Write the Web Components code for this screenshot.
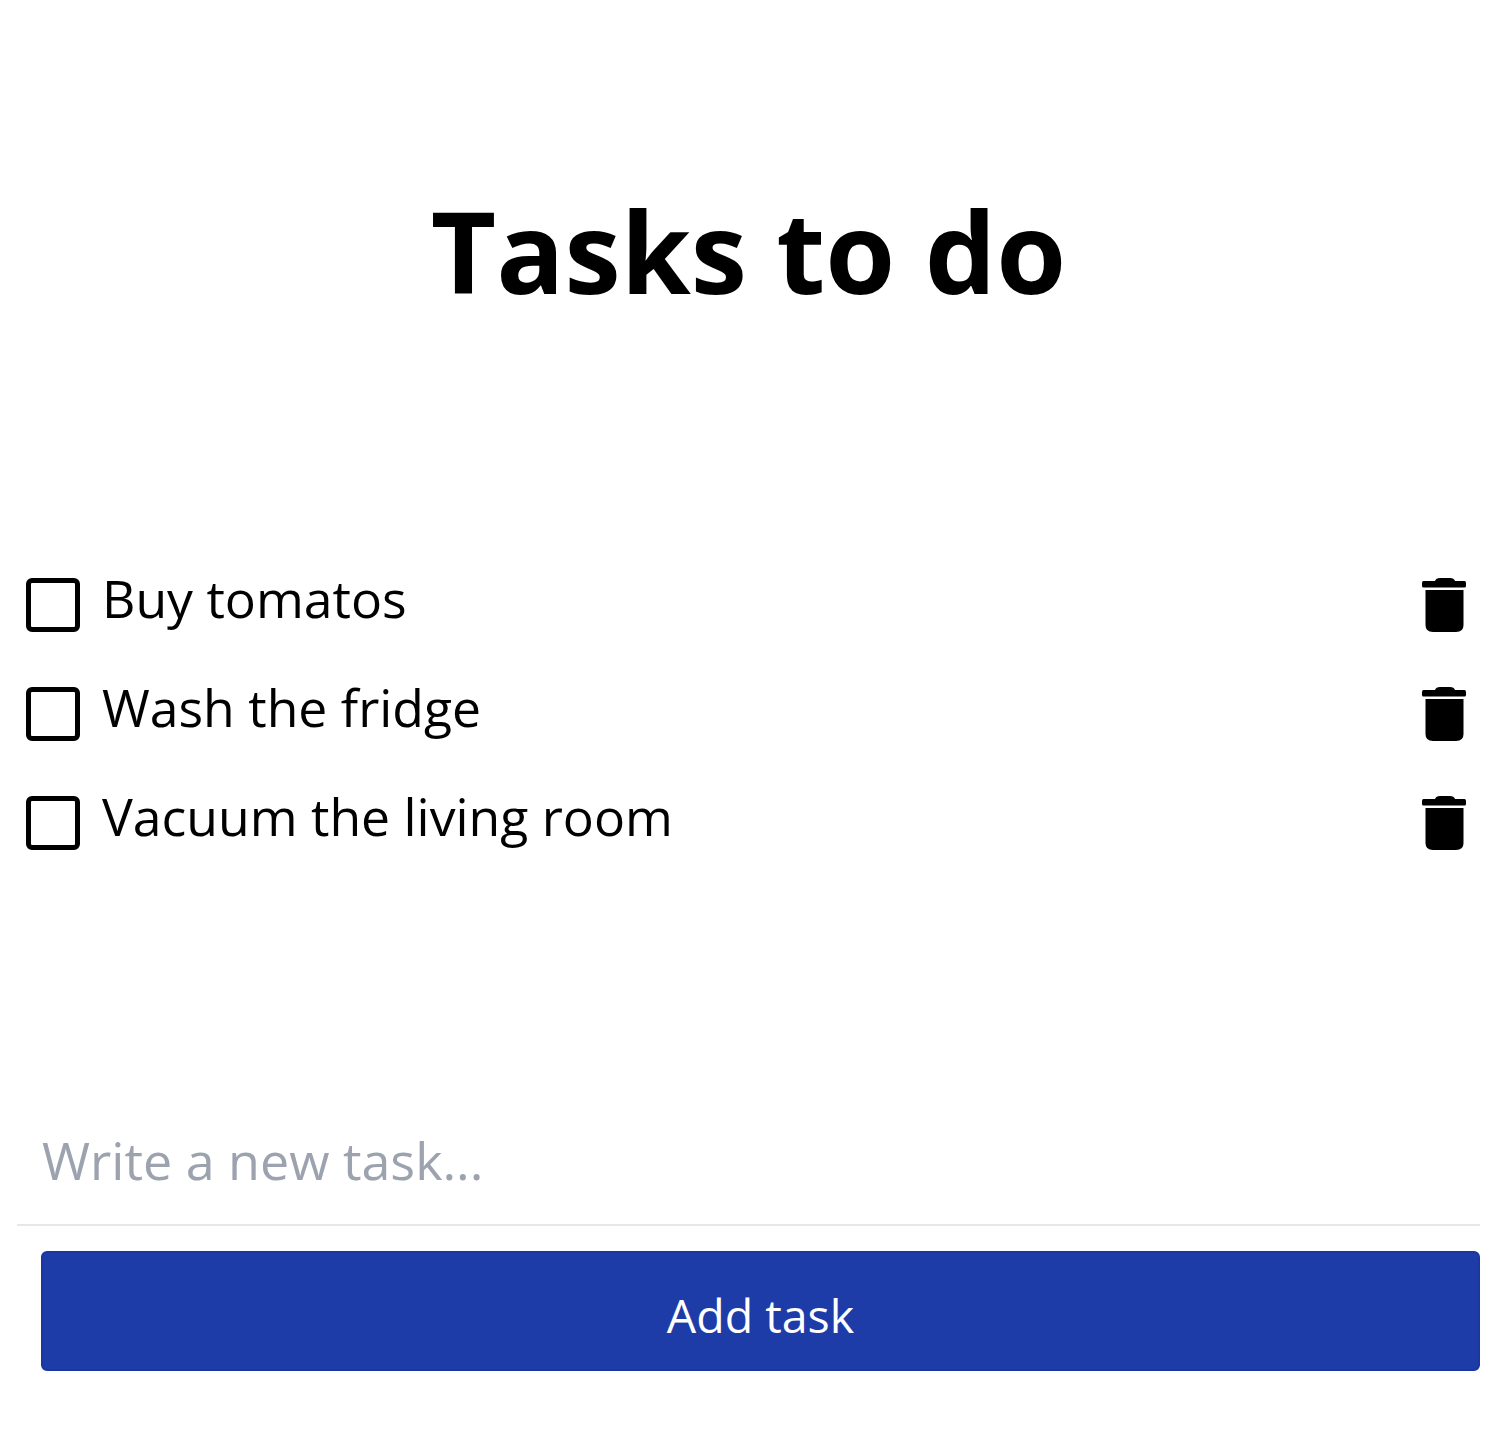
<!DOCTYPE html>
<html lang="en">
<head>
<meta charset="utf-8">
<title>Tasks to do</title>
<style>
  html, body { margin: 0; background: #fff; }
  body { font-family: "Open Sans", "Noto Sans", "Liberation Sans", sans-serif; color: #000; }
</style>
</head>
<body>
<todo-app>
  <task-item>Buy tomatos</task-item>
  <task-item>Wash the fridge</task-item>
  <task-item>Vacuum the living room</task-item>
</todo-app>
<script>
const itemTemplate = document.createElement('template')
itemTemplate.innerHTML = `
<style>
  :host { display: flex; align-items: flex-start; height: 54px; }
  #check {
    box-sizing: border-box;
    flex: none;
    width: 54px;
    height: 54px;
    border: 5px solid #000;
    border-radius: 6px;
    background: #fff;
    margin: 0;
    padding: 0;
    cursor: pointer;
  }
  #label {
    flex: 1;
    margin-left: 22px;
    font-size: 51.700px;
    line-height: 41px;
    white-space: nowrap;
  }
  button {
    flex: none;
    width: 44px;
    height: 54px;
    padding: 0;
    border: none;
    background: none;
    cursor: pointer;
  }
  svg { display: block; width: 44px; height: 54px; overflow: visible; }
</style>
<div id="check" role="checkbox"></div>
<div id="label"><slot></slot></div>
<button aria-label="Delete task">
  <svg viewBox="0 0 44 54">
    <path d="M13 3Q14 0 18 0H28Q32 0 33 3H42.500Q44 3 44 5V8Q44 9.500 42.500 9.500H1.500Q0 9.500 0 8V5Q0 3 1.500 3Z" fill="#000"/>
    <path d="M3.500 12H41.500V47Q41.500 54 34 54H11Q3.500 54 3.500 47Z" fill="#000"/>
  </svg>
</button>
`
customElements.define('task-item',
  /**
   * One row of the list: checkbox, text and delete button.
   */
  class extends HTMLElement {
    constructor () {
      super()
      this.attachShadow({ mode: 'open' })
        .appendChild(itemTemplate.content.cloneNode(true))
    }
  })

const formTemplate = document.createElement('template')
formTemplate.innerHTML = `
<style>
  :host { display: block; }
  input {
    display: block;
    box-sizing: border-box;
    width: 100%;
    height: 99px;
    padding: 0 0 32px 25px;
    border: none;
    border-bottom: 2px solid #e5e7eb;
    outline: none;
    background: none;
    font: 52px "Open Sans", "Noto Sans", sans-serif;
  }
  input::placeholder { color: #9ca3af; opacity: 1; }
  button {
    display: block;
    box-sizing: border-box;
    width: calc(100% - 24px);
    height: 120px;
    margin: 25px 0 0 24px;
    padding: 8px 0 0 0;
    border: 2px solid #1a36a0;
    border-radius: 6px;
    background: #1e3ca8;
    color: #fff;
    font: 46.500px "Open Sans", "Noto Sans", sans-serif;
    cursor: pointer;
  }
</style>
<input type="text" placeholder="Write a new task...">
<button>Add task</button>
`
customElements.define('task-form',
  /**
   * The input and the add button under the list.
   */
  class extends HTMLElement {
    constructor () {
      super()
      this.attachShadow({ mode: 'open' })
        .appendChild(formTemplate.content.cloneNode(true))
    }
  })

const appTemplate = document.createElement('template')
appTemplate.innerHTML = `
<style>
  :host { display: block; box-sizing: border-box; height: 1447px; padding: 0 20px 0 17px; }
  h1 {
    margin: 0;
    padding-top: 179px;
    height: 578px;
    box-sizing: border-box;
    text-align: center;
    font-size: 113px;
    line-height: 142px;
    font-weight: 700;
  }
  #list {
    display: flex;
    flex-direction: column;
    gap: 55px;
    padding: 0 14px 0 9px;
  }
  task-form { margin-top: 277px; }
</style>
<h1>Tasks to do</h1>
<div id="list"><slot></slot></div>
<task-form></task-form>
`
customElements.define('todo-app',
  /**
   * The whole page.
   */
  class extends HTMLElement {
    constructor () {
      super()
      this.attachShadow({ mode: 'open' })
        .appendChild(appTemplate.content.cloneNode(true))
    }
  })
</script>
</body>
</html>
